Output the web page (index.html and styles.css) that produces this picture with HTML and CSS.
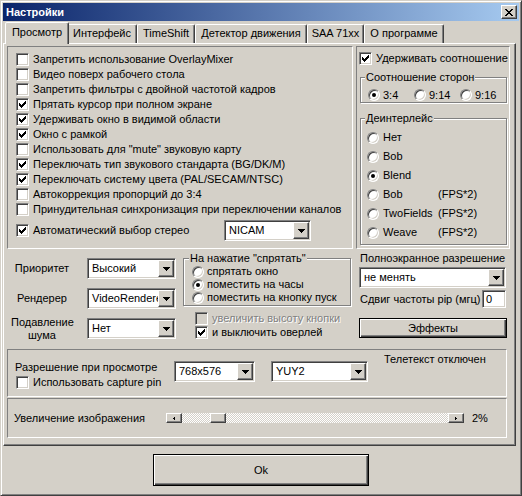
FILE: index.html
```html
<!DOCTYPE html>
<html lang="ru">
<head>
<meta charset="utf-8">
<link rel="stylesheet" href="styles.css">
</head>
<body>
<div class="window">
  <div class="titlebar">
    <span class="title">Настройки</span>
    <span class="close raised"><svg width="8" height="7" viewBox="0 0 8 7"><path d="M0 0h2v1H0zM6 0h2v1H6zM1 1h2v1H1zM5 1h2v1H5zM2 2h4v1H2zM3 3h2v1H3zM2 4h4v1H2zM1 5h2v1H1zM5 5h2v1H5zM0 6h2v1H0zM6 6h2v1H6z" fill="#000"/></svg></span>
  </div>
  <div class="tabs">
    <div class="tab active t1">Просмотр</div>
    <div class="tab t2">Интерфейс</div>
    <div class="tab t3">TimeShift</div>
    <div class="tab t4">Детектор движения</div>
    <div class="tab t5">SAA 71xx</div>
    <div class="tab t6">О программе</div>
  </div>
  <div class="tabpanel">
    <div class="row1">
      <div class="panel opts">
        <div class="chk"><span class="box"></span><span>Запретить использование OverlayMixer</span></div>
        <div class="chk"><span class="box"></span><span>Видео поверх рабочего стола</span></div>
        <div class="chk"><span class="box"></span><span>Запретить фильтры с двойной частотой кадров</span></div>
        <div class="chk"><span class="box"><svg width="11" height="11" viewBox="0 0 11 11"><path d="M2 4h1v3H2zM3 5h1v3H3zM4 6h1v3H4zM5 5h1v3H5zM6 4h1v3H6zM7 3h1v3H7zM8 2h1v3H8z" fill="#000"/></svg></span><span>Прятать курсор при полном экране</span></div>
        <div class="chk"><span class="box"><svg width="11" height="11" viewBox="0 0 11 11"><path d="M2 4h1v3H2zM3 5h1v3H3zM4 6h1v3H4zM5 5h1v3H5zM6 4h1v3H6zM7 3h1v3H7zM8 2h1v3H8z" fill="#000"/></svg></span><span>Удерживать окно в видимой области</span></div>
        <div class="chk"><span class="box"><svg width="11" height="11" viewBox="0 0 11 11"><path d="M2 4h1v3H2zM3 5h1v3H3zM4 6h1v3H4zM5 5h1v3H5zM6 4h1v3H6zM7 3h1v3H7zM8 2h1v3H8z" fill="#000"/></svg></span><span>Окно с рамкой</span></div>
        <div class="chk"><span class="box"></span><span>Использовать для "mute" звуковую карту</span></div>
        <div class="chk"><span class="box"><svg width="11" height="11" viewBox="0 0 11 11"><path d="M2 4h1v3H2zM3 5h1v3H3zM4 6h1v3H4zM5 5h1v3H5zM6 4h1v3H6zM7 3h1v3H7zM8 2h1v3H8z" fill="#000"/></svg></span><span>Переключать тип звукового стандарта (BG/DK/M)</span></div>
        <div class="chk"><span class="box"><svg width="11" height="11" viewBox="0 0 11 11"><path d="M2 4h1v3H2zM3 5h1v3H3zM4 6h1v3H4zM5 5h1v3H5zM6 4h1v3H6zM7 3h1v3H7zM8 2h1v3H8z" fill="#000"/></svg></span><span>Переключать систему цвета (PAL/SECAM/NTSC)</span></div>
        <div class="chk"><span class="box"></span><span>Автокоррекция пропорций до 3:4</span></div>
        <div class="chk"><span class="box"></span><span>Принудительная синхронизация при переключении каналов</span></div>
        <div class="stereo">
          <div class="chk stereo-chk"><span class="box"><svg width="11" height="11" viewBox="0 0 11 11"><path d="M2 4h1v3H2zM3 5h1v3H3zM4 6h1v3H4zM5 5h1v3H5zM6 4h1v3H6zM7 3h1v3H7zM8 2h1v3H8z" fill="#000"/></svg></span><span>Автоматический выбор стерео</span></div>
          <div class="combo nicam"><span class="val">NICAM</span><span class="drop raised"><svg width="7" height="4" viewBox="0 0 7 4"><path d="M0 0h7v1H0zM1 1h5v1H1zM2 2h3v1H2zM3 3h1v1H3z" fill="#000"/></svg></span></div>
        </div>
      </div>
      <div class="panel aspect">
        <div class="chk keep"><span class="box"><svg width="11" height="11" viewBox="0 0 11 11"><path d="M2 4h1v3H2zM3 5h1v3H3zM4 6h1v3H4zM5 5h1v3H5zM6 4h1v3H6zM7 3h1v3H7zM8 2h1v3H8z" fill="#000"/></svg></span><span>Удерживать соотношение</span></div>
        <fieldset class="group g-ratio">
          <legend>Соотношение сторон</legend>
          <div class="ratio-row">
            <div class="opt"><span class="radio on"></span><span>3:4</span></div>
            <div class="opt"><span class="radio"></span><span>9:14</span></div>
            <div class="opt"><span class="radio"></span><span>9:16</span></div>
          </div>
        </fieldset>
        <fieldset class="group g-deint">
          <legend>Деинтерлейс</legend>
          <div class="deint-list">
            <div class="ropt"><span class="radio"></span><span class="rname">Нет</span></div>
            <div class="ropt"><span class="radio"></span><span class="rname">Bob</span></div>
            <div class="ropt"><span class="radio on"></span><span class="rname">Blend</span></div>
            <div class="ropt"><span class="radio"></span><span class="rname">Bob</span><span>(FPS*2)</span></div>
            <div class="ropt"><span class="radio"></span><span class="rname">TwoFields</span><span>(FPS*2)</span></div>
            <div class="ropt"><span class="radio"></span><span class="rname">Weave</span><span>(FPS*2)</span></div>
          </div>
        </fieldset>
      </div>
    </div>

    <div class="row2">
      <div class="colA">
        <div class="frow"><span class="flabel">Приоритет</span><div class="combo"><span class="val">Высокий</span><span class="drop raised"><svg width="7" height="4" viewBox="0 0 7 4"><path d="M0 0h7v1H0zM1 1h5v1H1zM2 2h3v1H2zM3 3h1v1H3z" fill="#000"/></svg></span></div></div>
        <div class="frow"><span class="flabel">Рендерер</span><div class="combo"><span class="val">VideoRenderer</span><span class="drop raised"><svg width="7" height="4" viewBox="0 0 7 4"><path d="M0 0h7v1H0zM1 1h5v1H1zM2 2h3v1H2zM3 3h1v1H3z" fill="#000"/></svg></span></div></div>
        <div class="frow"><span class="flabel">Подавление<br>шума</span><div class="combo"><span class="val">Нет</span><span class="drop raised"><svg width="7" height="4" viewBox="0 0 7 4"><path d="M0 0h7v1H0zM1 1h5v1H1zM2 2h3v1H2zM3 3h1v1H3z" fill="#000"/></svg></span></div></div>
      </div>
      <div class="colB">
        <fieldset class="group g-hide">
          <legend>На нажатие "спрятать"</legend>
          <div class="hide-list">
            <div class="ropt"><span class="radio"></span><span>спрятать окно</span></div>
            <div class="ropt"><span class="radio on"></span><span>поместить на часы</span></div>
            <div class="ropt"><span class="radio"></span><span>поместить на кнопку пуск</span></div>
          </div>
        </fieldset>
        <div class="chks">
          <div class="chk"><span class="box dis"></span><span class="disabled">увеличить высоту кнопки</span></div>
          <div class="chk"><span class="box"><svg width="11" height="11" viewBox="0 0 11 11"><path d="M2 4h1v3H2zM3 5h1v3H3zM4 6h1v3H4zM5 5h1v3H5zM6 4h1v3H6zM7 3h1v3H7zM8 2h1v3H8z" fill="#000"/></svg></span><span>и выключить оверлей</span></div>
        </div>
      </div>
      <div class="colC">
        <div class="fs-label">Полноэкранное разрешение</div>
        <div class="combo fs-combo"><span class="val">не менять</span><span class="drop raised"><svg width="7" height="4" viewBox="0 0 7 4"><path d="M0 0h7v1H0zM1 1h5v1H1zM2 2h3v1H2zM3 3h1v1H3z" fill="#000"/></svg></span></div>
        <div class="pip-row"><span>Сдвиг частоты pip (мгц)</span><span class="input">0</span></div>
        <div class="btn effects">Эффекты</div>
      </div>
    </div>

    <div class="panel row3">
      <div class="r3-left">
        <div>Разрешение при просмотре</div>
        <div class="chk"><span class="box"></span><span>Использовать capture pin</span></div>
      </div>
      <div class="combo res-combo"><span class="val">768x576</span><span class="drop raised"><svg width="7" height="4" viewBox="0 0 7 4"><path d="M0 0h7v1H0zM1 1h5v1H1zM2 2h3v1H2zM3 3h1v1H3z" fill="#000"/></svg></span></div>
      <div class="combo fmt-combo"><span class="val">YUY2</span><span class="drop raised"><svg width="7" height="4" viewBox="0 0 7 4"><path d="M0 0h7v1H0zM1 1h5v1H1zM2 2h3v1H2zM3 3h1v1H3z" fill="#000"/></svg></span></div>
      <div class="teletext">Телетекст отключен</div>
    </div>

    <div class="panel row4">
      <span class="zoom-label">Увеличение изображения</span>
      <div class="scroll">
        <span class="sarrow raised"><svg width="2" height="3" viewBox="0 0 2 3"><path d="M1 0h1v3H1zM0 1h1v1H0z" fill="#000"/></svg></span>
        <span class="strack"><span class="thumb raised"></span></span>
        <span class="sarrow raised"><svg width="2" height="3" viewBox="0 0 2 3"><path d="M0 0h1v3H0zM1 1h1v1H1z" fill="#000"/></svg></span>
      </div>
      <span class="pct">2%</span>
    </div>
  </div>
  <div class="footer">
    <div class="btn okbtn">Ok</div>
  </div>
</div>
</body>
</html>
```

FILE: styles.css
```css
* { box-sizing: border-box; }
html, body { margin: 0; padding: 0; }
body {
  background: #d4d0c8;
  font-family: "Liberation Sans", Arial, sans-serif;
  font-size: 11px;
  line-height: 13px;
  color: #000;
}
.window {
  width: 522px;
  height: 496px;
  background: #d4d0c8;
  border: 1px solid;
  border-color: #d4d0c8 #404040 #404040 #d4d0c8;
  box-shadow: inset 1px 1px #fff, inset -1px -1px #808080;
  padding: 2px;
  display: flex;
  flex-direction: column;
}
.raised {
  background: #d4d0c8;
  border: 1px solid;
  border-color: #fff #404040 #404040 #fff;
  box-shadow: inset -1px -1px #808080;
}
.titlebar {
  height: 18px;
  flex: none;
  display: flex;
  align-items: center;
  justify-content: space-between;
  padding: 0 2px 0 3px;
  background: linear-gradient(to right, #0a246a, #a6caf0);
}
.title { color: #fff; font-weight: bold; font-size: 11px; }
.close {
  width: 16px;
  height: 14px;
  display: flex;
  align-items: center;
  justify-content: center;
}
svg { display: block; }

.tabs {
  height: 22px;
  flex: none;
  display: flex;
  align-items: flex-end;
  padding-left: 4px;
}
.tab {
  height: 19px;
  flex: none;
  border: 1px solid;
  border-bottom: 0;
  border-color: #fff #404040 transparent #fff;
  box-shadow: inset -1px 0 #808080;
  border-radius: 2px 2px 0 0;
  text-align: center;
  padding-top: 2px;
  white-space: nowrap;
}
.tab.active {
  height: 22px;
  margin: 0 -2px -1px;
  padding-top: 3px;
  position: relative;
  z-index: 1;
  background: #d4d0c8;
}
.t1 { width: 64px; }
.t2 { width: 70px; }
.t3 { width: 58px; }
.t4 { width: 112px; }
.t5 { width: 57px; }
.t6 { width: 80px; }

.tabpanel {
  width: 513px;
  height: 403px;
  flex: none;
  border: 1px solid;
  border-color: #fff #404040 #404040 #fff;
  box-shadow: inset -1px -1px #808080;
  padding: 2px 0 0 3px;
}
.panel {
  border: 1px solid;
  border-color: #808080 #fff #fff #808080;
}
.row1 { display: flex; height: 203px; gap: 3px; }
.opts { width: 346px; padding: 5px 0 0 8px; }
.aspect { width: 154px; padding: 4px 0 0 2px; }

.chk {
  display: flex;
  align-items: center;
  gap: 4px;
  height: 15px;
  white-space: nowrap;
}
.box {
  width: 13px;
  height: 13px;
  flex: none;
  background: #fff;
  border: 1px solid;
  border-color: #808080 #fff #fff #808080;
  box-shadow: inset 1px 1px #404040, inset -1px -1px #d4d0c8;
}
.box.dis { background: #d4d0c8; }
.disabled { color: #808080; text-shadow: 1px 1px 0 #fff; }

.stereo { display: flex; align-items: center; height: 21px; margin-top: 3px; }
.stereo-chk { width: 208px; }
.nicam { width: 87px; }

.combo {
  display: flex;
  align-items: center;
  height: 21px;
  background: #fff;
  border: 1px solid;
  border-color: #808080 #fff #fff #808080;
  box-shadow: inset 1px 1px #404040, inset -1px -1px #d4d0c8;
  padding: 1px;
  flex: none;
}
.combo .val {
  flex: 1;
  min-width: 0;
  overflow: hidden;
  white-space: nowrap;
  padding-left: 3px;
}
.combo .drop {
  width: 16px;
  height: 17px;
  flex: none;
  display: flex;
  align-items: center;
  justify-content: center;
}

.group {
  margin: 0;
  padding: 0;
  min-width: 0;
  border: 1px solid #808080;
  box-shadow: inset 1px 1px #fff, 1px 1px #fff;
}
.group legend {
  padding: 0 1px;
  margin-left: 4px;
  background: #d4d0c8;
  line-height: 13px;
}
.g-ratio { width: 147px; margin: 5px 0 0 1px; }
.ratio-row {
  display: flex;
  align-items: center;
  height: 14px;
  margin-top: 4px;
  padding-left: 7px;
}
.opt { display: flex; align-items: center; gap: 3px; width: 46px; }
.g-deint { width: 147px; margin: 9px 0 0 1px; }
.deint-list { padding: 3px 0 2px 6px; }
.ropt { display: flex; align-items: center; height: 19px; white-space: nowrap; }
.ropt .radio { margin-right: 4px; }
.rname { width: 55px; }

.radio {
  width: 12px;
  height: 12px;
  flex: none;
  border-radius: 50%;
  background: #fff;
  border: 1px solid;
  border-color: #808080 #fff #fff #808080;
  box-shadow: inset 1px 1px #404040, inset -1px -1px #d4d0c8;
  display: flex;
  align-items: center;
  justify-content: center;
}
.radio.on::after {
  content: "";
  width: 4px;
  height: 4px;
  border-radius: 50%;
  background: #000;
}

.row2 { display: flex; height: 96px; margin-top: 3px; padding-left: 4px; }
.colA { width: 165px; padding-top: 6px; display: flex; flex-direction: column; gap: 9px; }
.frow { display: flex; align-items: center; height: 21px; }
.flabel { width: 62px; text-align: center; }
.frow .combo { margin-left: 14px; width: 89px; }
.colB { width: 168px; margin-left: 7px; }
.g-hide { width: 168px; }
.g-hide legend { margin-left: 5px; }
.hide-list { padding: 0 0 1px 8px; }
.hide-list .ropt { height: 13px; }
.hide-list .radio { margin-right: 3px; }
.chks { margin: 5px 0 0 12px; }
.chks .chk { height: 14px; }
.colC { width: 148px; margin-left: 8px; }
.fs-label { padding-left: 1px; height: 13px; white-space: nowrap; }
.fs-combo { width: 147px; margin-top: 2px; }
.pip-row {
  display: flex;
  align-items: center;
  justify-content: space-between;
  height: 18px;
  margin-top: 2px;
  padding-left: 1px;
  width: 147px;
}
.input {
  width: 24px;
  height: 18px;
  background: #fff;
  border: 1px solid;
  border-color: #808080 #fff #fff #808080;
  box-shadow: inset 1px 1px #404040, inset -1px -1px #d4d0c8;
  padding: 1px 0 0 3px;
  line-height: 14px;
}
.btn {
  display: flex;
  align-items: center;
  justify-content: center;
  background: #d4d0c8;
  border: 1px solid #000;
  box-shadow: inset 1px 1px #fff, inset -1px -1px #404040, inset -2px -2px #808080;
}
.effects { width: 148px; height: 20px; margin-top: 10px; }

.row3 {
  width: 500px;
  height: 48px;
  margin-top: 1px;
  display: flex;
  align-items: flex-start;
  padding-left: 7px;
}
.r3-left { width: 159px; padding-top: 11px; white-space: nowrap; }
.r3-left .chk { margin-left: 1px; margin-top: 1px; }
.res-combo { width: 81px; margin-top: 11px; }
.fmt-combo { width: 97px; margin-top: 11px; margin-left: 16px; }
.teletext { margin-left: 16px; margin-top: 3px; white-space: nowrap; }

.row4 {
  width: 500px;
  height: 40px;
  margin-top: 1px;
  display: flex;
  align-items: center;
  padding-left: 6px;
}
.zoom-label { width: 152px; white-space: nowrap; }
.scroll { width: 298px; height: 10px; display: flex; }
.sarrow {
  width: 16px;
  height: 10px;
  flex: none;
  display: flex;
  align-items: center;
  justify-content: center;
}
.strack {
  flex: 1;
  height: 10px;
  background: repeating-conic-gradient(#fff 0 25%, #d4d0c8 0 50%) 0 0 / 2px 2px;
}
.thumb { display: block; width: 16px; height: 10px; margin-left: 28px; }
.pct { margin-left: 8px; }

.footer { padding: 8px 0 0 150px; }
.okbtn { width: 216px; height: 32px; }
```
